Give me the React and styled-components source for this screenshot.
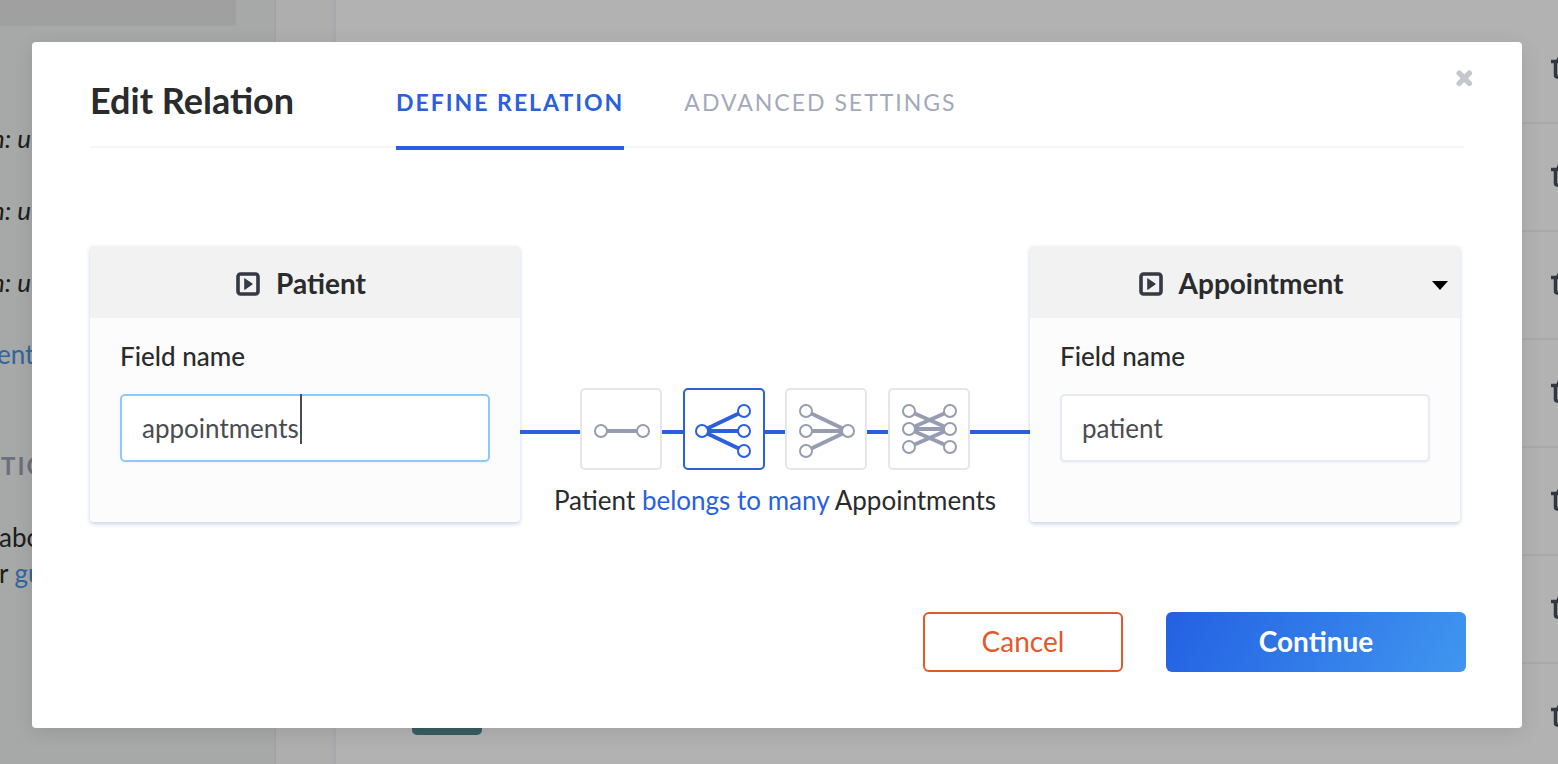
import React, { useState } from "react";
import styled, { createGlobalStyle, css } from "styled-components";

const Global = createGlobalStyle`
  *, *::before, *::after { box-sizing: border-box; }
  html, body, #root { height: 100%; }
  body {
    margin: 0;
    overflow: hidden;
    background: #ffffff;
    color: #2a2b2c;
    font-family: Lato, "Liberation Sans", sans-serif;
    font-size: 26px;
  }
  button, input, select { font-family: inherit; }
  h1, h2, p, ul { margin: 0; padding: 0; }
`;

const Screen = styled.div`
  display: grid;
  min-height: 100%;
  height: 100%;
  > * { grid-area: 1 / 1; min-width: 0; min-height: 0; }
`;

const Workspace = styled.div`
  display: flex;
  overflow: hidden;
`;

const Sidebar = styled.aside`
  flex: 0 0 276px;
  border-right: 2px solid #e8ecea;
  background: #eff3f1;
  white-space: nowrap;
  overflow: hidden;
`;

const SearchBar = styled.div`
  width: 236px;
  height: 26px;
  border-radius: 0 0 3px 0;
  background: #e6e6e6;
`;

const FieldList = styled.ul`
  list-style: none;
  margin: 76px 0 0 -9px;
`;

const FieldItem = styled.li`
  height: 72px;
  line-height: 72px;
  font-style: italic;
  font-size: 26px;
`;

const SideLink = styled.a`
  color: #4a90e2;
  text-decoration: none;
`;

const AddField = styled.p`
  margin-left: -3px;
  height: 72px;
  line-height: 72px;
`;

const SideHeading = styled.h2`
  margin: 53px 0 0 1px;
  line-height: 46px;
  font-size: 24px;
  font-weight: 700;
  letter-spacing: 2px;
  color: #9aa0b4;
`;

const SideNote = styled.p`
  margin: 30px 0 0 -1px;
  line-height: 36px;
`;

const Gutter = styled.div`
  flex: 0 0 60px;
  border-right: 3px solid #f1f3f8;
  background: #fafafa;
`;

const Canvas = styled.main`
  flex: 1;
  min-width: 0;
  display: flex;
  align-items: flex-end;
  justify-content: space-between;
`;

const Tag = styled.div`
  width: 70px;
  height: 40px;
  margin: 0 0 29px 76px;
  border-radius: 5px;
  background: #51868f;
`;

const RowList = styled.ul`
  align-self: flex-start;
  width: 50%;
  list-style: none;
  margin-top: 16px;
`;

const Row = styled.li`
  display: flex;
  align-items: center;
  justify-content: flex-end;
  height: 108px;
  border-bottom: 2px solid #f2f2f2;
  overflow: hidden;
`;

const TrashIcon = styled.svg`
  flex: none;
  width: 24px;
  height: 24px;
  margin-right: -17px;
`;

const Overlay = styled.div`
  z-index: 1;
  padding: 42px 36px 36px 32px;
  background: rgba(0, 0, 0, 0.3);
`;

const Dialog = styled.section`
  display: flex;
  flex-direction: column;
  height: 100%;
  padding: 0 56px 56px 58px;
  border-radius: 4px;
  background: #ffffff;
  box-shadow: 0 4px 20px rgba(0, 0, 0, 0.1);
`;

const DialogHeader = styled.header`
  display: flex;
  align-items: flex-start;
  height: 106px;
  margin-right: 2px;
  border-bottom: 2px solid #f5f6f6;
`;

const Title = styled.h1`
  width: 306px;
  line-height: 116px;
  font-size: 36px;
  font-weight: 700;
`;

const Tabs = styled.div`
  flex: 1;
  display: flex;
  gap: 60px;
`;

const Tab = styled.button`
  height: 108px;
  padding: 16px 0 0;
  border: 0;
  border-bottom: 4px solid ${(p) => (p.$active ? "#2a5fe0" : "transparent")};
  background: none;
  font-size: 23px;
  font-weight: ${(p) => (p.$active ? 700 : 400)};
  letter-spacing: 2px;
  text-transform: uppercase;
  color: ${(p) => (p.$active ? "#2a5fe0" : "#a3a9ba")};
`;

const CloseButton = styled.button`
  display: flex;
  margin: 28px -9px 0 0;
  padding: 0;
  border: 0;
  background: none;
`;

const Relation = styled.div`
  display: flex;
  justify-content: space-between;
  margin: 98px 6px 0 0;
`;

const Card = styled.section`
  flex: 0 1 430px;
  height: 276px;
  border-radius: 4px;
  overflow: hidden;
  background: #fcfcfc;
  box-shadow: 0 2px 4px rgba(42, 80, 150, 0.26);
`;

const CardHeader = styled.div`
  display: grid;
  grid-template-columns: 1fr auto 1fr;
  align-items: center;
  height: 72px;
  padding: 0 12px;
  background: #f2f2f2;
`;

const ModelName = styled.h2`
  grid-column: 2;
  display: flex;
  align-items: center;
  gap: 16px;
  padding: 2px 8px 0 0;
  line-height: 36px;
  font-size: 28px;
  font-weight: 700;
  svg { margin-top: 2px; }
`;

const MenuButton = styled.button`
  justify-self: end;
  display: flex;
  margin-top: 6px;
  padding: 0;
  border: 0;
  background: none;
`;

const CardBody = styled.div`
  padding: 20px 30px 0;
`;

const Label = styled.label`
  display: block;
  margin-bottom: 20px;
  line-height: 36px;
  font-size: 26px;
  font-weight: 500;
`;

const InputWrap = styled.div`
  position: relative;
`;

const Input = styled.input`
  display: block;
  width: 100%;
  height: 68px;
  padding: 0 20px;
  border: 2px solid ${(p) => (p.$focused ? "#8bcafa" : "#e6eaf3")};
  border-radius: 5px;
  outline: none;
  background: #ffffff;
  box-shadow: 0 1px 2px rgba(42, 80, 150, 0.06);
  font-size: 26px;
  color: #4a4c4f;
`;

const Caret = styled.span`
  position: absolute;
  top: 0;
  left: 180px;
  width: 2px;
  height: 50px;
  background: #4a4c4f;
`;

const Middle = styled.div`
  flex: 1;
  margin-top: 142px;
  text-align: center;
`;

const Kinds = styled.div`
  display: flex;
  align-items: center;
`;

const Wire = styled.span`
  flex: ${(p) => (p.$end ? "60 1 0" : "21 1 0")};
  height: 4px;
  margin-top: 6px;
  background: #2a5fe0;
`;

const Kind = styled.button`
  display: flex;
  width: 82px;
  height: 82px;
  padding: 0;
  border: 2px solid ${(p) => (p.$active ? "#2a5fe0" : "#e6e6e6")};
  border-radius: 5px;
  background: #ffffff;
  color: ${(p) => (p.$active ? "#2a5fe0" : "#979db0")};
`;

const Sentence = styled.p`
  line-height: 36px;
  margin-top: 12px;
  white-space: nowrap;
`;

const Verb = styled.span`
  color: #2a5fe0;
`;

const Actions = styled.footer`
  display: flex;
  justify-content: flex-end;
  gap: 43px;
  margin-top: auto;
`;

const Action = styled.button`
  height: 60px;
  padding: 0 0 3px;
  border-radius: 6px;
  font-size: 28px;
  ${(p) =>
    p.$primary
      ? css`
          width: 300px;
          border: 0;
          background: linear-gradient(118deg, #2360e2, #4096f0);
          font-weight: 700;
          color: #ffffff;
        `
      : css`
          width: 200px;
          border: 2px solid #e25a2c;
          background: #ffffff;
          color: #e25a2c;
        `}
`;

const KIND_SHAPES = [
  { name: "One to one", dots: [[19, 41], [61, 41]], lines: [[0, 1]] },
  {
    name: "One to many",
    dots: [[17, 41], [59, 21], [59, 41], [59, 61]],
    lines: [[0, 1], [0, 2], [0, 3]],
  },
  {
    name: "Many to one",
    dots: [[19, 21], [19, 41], [19, 61], [61, 41]],
    lines: [[0, 3], [1, 3], [2, 3]],
  },
  {
    name: "Many to many",
    dots: [[19, 21], [19, 39], [19, 57], [60, 21], [60, 39], [60, 57]],
    lines: [[0, 4], [1, 3], [1, 4], [1, 5], [2, 4]],
  },
];

function KindDrawing({ dots, lines }) {
  return (
    <svg width="78" height="78" viewBox="0 0 78 78" aria-hidden="true">
      {lines.map(([a, b]) => (
        <line
          key={`${a}-${b}`}
          x1={dots[a][0]}
          y1={dots[a][1]}
          x2={dots[b][0]}
          y2={dots[b][1]}
          stroke="currentColor"
          strokeWidth="4"
        />
      ))}
      {dots.map(([x, y]) => (
        <circle key={`${x}-${y}`} cx={x} cy={y} r="6" fill="#fff" stroke="currentColor" strokeWidth="2" />
      ))}
    </svg>
  );
}

function ModelIcon() {
  return (
    <svg width="24" height="24" viewBox="0 0 24 24" aria-hidden="true">
      <rect x="2" y="2" width="20" height="20" rx="2.5" fill="none" stroke="#343943" strokeWidth="3.6" />
      <path d="M8.2 6.8v10.6c0 .5.4.6.8.3l7.4-5.1c.3-.3.3-.7 0-1L9 6.5c-.4-.3-.8-.2-.8.3z" fill="#343943" />
    </svg>
  );
}

function ModelCard({ id, name, value, focused, selectable }) {
  const [text, setText] = useState(value);
  return (
    <Card>
      <CardHeader>
        <ModelName>
          <ModelIcon />
          {name}
        </ModelName>
        {selectable && (
          <MenuButton aria-label="Choose model">
            <svg width="16" height="9" viewBox="0 0 16 9" aria-hidden="true">
              <path d="M0 0h16L8 9z" fill="#000" />
            </svg>
          </MenuButton>
        )}
      </CardHeader>
      <CardBody>
        <Label htmlFor={id}>Field name</Label>
        <InputWrap>
          <Input id={id} value={text} $focused={focused} onChange={(e) => setText(e.target.value)} />
          {focused && <Caret />}
        </InputWrap>
      </CardBody>
    </Card>
  );
}

export default function App() {
  const [kind, setKind] = useState(1);
  return (
    <>
      <Global />
      <Screen>
        <Workspace>
          <Sidebar>
            <SearchBar />
            <FieldList>
              {[0, 1, 2].map((n) => (
                <FieldItem key={n}>n: u</FieldItem>
              ))}
            </FieldList>
            <AddField>
              <SideLink href="#field">ent</SideLink>
            </AddField>
            <SideHeading>TIO</SideHeading>
            <SideNote>
              abo
              <br />r <SideLink href="#guide">gu</SideLink>
            </SideNote>
          </Sidebar>
          <Gutter />
          <Canvas>
            <Tag />
            <RowList>
              {[0, 1, 2, 3, 4, 5, 6].map((n) => (
                <Row key={n}>
                  <TrashIcon viewBox="0 0 24 24" aria-hidden="true">
                    <path
                      d="M0 4.5h24M6.5 4.5L8 1.5h8l1.5 3M4.5 5v13q0 2 2 2h11q2 0 2-2V5"
                      fill="none"
                      stroke="#4a505c"
                      strokeWidth="3.5"
                    />
                  </TrashIcon>
                </Row>
              ))}
            </RowList>
          </Canvas>
        </Workspace>
        <Overlay>
          <Dialog role="dialog" aria-labelledby="dialog-title">
            <DialogHeader>
              <Title id="dialog-title">Edit Relation</Title>
              <Tabs role="tablist">
                <Tab role="tab" aria-selected="true" $active>
                  Define relation
                </Tab>
                <Tab role="tab" aria-selected="false">
                  Advanced settings
                </Tab>
              </Tabs>
              <CloseButton aria-label="Close">
                <svg width="17" height="17" viewBox="0 0 17 17" aria-hidden="true">
                  <path d="M3.2 3.2l10.2 10.2M13.4 3.2L3.2 13.4" stroke="#c4c7cd" strokeWidth="5.4" strokeLinecap="round" />
                </svg>
              </CloseButton>
            </DialogHeader>
            <Relation>
              <ModelCard id="left-field" name="Patient" value="appointments" focused />
              <Middle>
                <Kinds>
                  <Wire $end />
                  {KIND_SHAPES.map((shape, i) => (
                    <React.Fragment key={shape.name}>
                      {i > 0 && <Wire />}
                      <Kind aria-label={shape.name} $active={i === kind} onClick={() => setKind(i)}>
                        <KindDrawing {...shape} />
                      </Kind>
                    </React.Fragment>
                  ))}
                  <Wire $end />
                </Kinds>
                <Sentence>
                  Patient <Verb>belongs to many</Verb> Appointments
                </Sentence>
              </Middle>
              <ModelCard id="right-field" name="Appointment" value="patient" selectable />
            </Relation>
            <Actions>
              <Action>Cancel</Action>
              <Action $primary>Continue</Action>
            </Actions>
          </Dialog>
        </Overlay>
      </Screen>
    </>
  );
}
